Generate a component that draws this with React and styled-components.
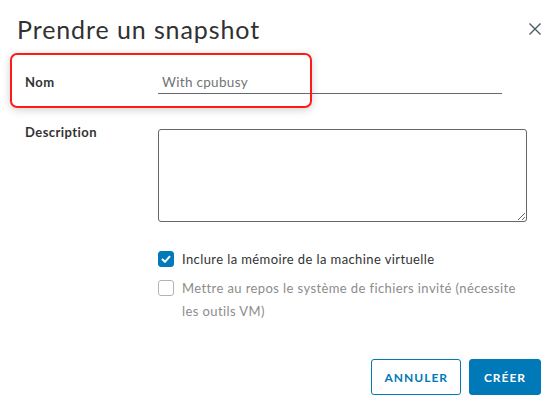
import styled, { createGlobalStyle } from 'styled-components';

const GlobalStyle = createGlobalStyle`
  html, body {
    margin: 0;
    padding: 0;
    background: #fff;
  }
  body {
    font-family: Lato, "Open Sans", sans-serif;
    color: #313131;
  }
  * {
    box-sizing: border-box;
  }
`;

const Modal = styled.div`
  width: 558px;
  height: 408px;
  background: #fff;
  display: flex;
  flex-direction: column;
`;

const Header = styled.div`
  display: flex;
  justify-content: space-between;
  align-items: center;
  padding: 14px 17px 0 17px;
  height: 44px;
`;

const Title = styled.h3`
  margin: 0;
  font-size: 25px;
  line-height: 30px;
  font-weight: 400;
  color: #313131;
  letter-spacing: 0.9px;
`;

const CloseButton = styled.button`
  border: none;
  background: none;
  padding: 0;
  width: 12px;
  height: 12px;
  display: flex;
  cursor: pointer;
`;

const Body = styled.div`
  padding: 26px 0 0 25px;
  display: flex;
  flex-direction: column;
`;

const Row = styled.div`
  position: relative;
  display: grid;
  grid-template-columns: 133px 1fr;
  align-items: ${(p) => (p.$top ? 'start' : 'center')};
  margin-bottom: ${(p) => p.$gap || 0}px;
`;

const Label = styled.label`
  font-size: 13px;
  font-weight: 700;
  line-height: 16px;
  letter-spacing: 0.45px;
  color: #333;
  margin-top: ${(p) => (p.$top ? '-5px' : '0')};
`;

const Highlight = styled.div`
  position: absolute;
  left: -15px;
  top: -17px;
  width: 302px;
  height: 55px;
  border: 2px solid #ff1a1a;
  border-radius: 7px;
  box-shadow: 0 2px 8px rgba(0, 0, 0, 0.18);
  pointer-events: none;
`;

const TextInput = styled.input`
  width: 344px;
  height: 24px;
  border: none;
  border-bottom: 1px solid #5f6a70;
  padding: 0 4px;
  font-family: inherit;
  font-size: 13.5px;
  letter-spacing: 0.3px;
  color: #333;
  outline: none;
  &::placeholder {
    color: #737373;
  }
`;

const TextArea = styled.textarea`
  width: 369px;
  height: 93px;
  border: 1px solid #666;
  border-radius: 3px;
  font-family: inherit;
  font-size: 13px;
  resize: both;
  outline: none;
  display: block;
`;

const Checks = styled.div`
  display: flex;
  flex-direction: column;
  gap: 6px;
  padding-left: 133px;
  margin-top: 26px;
`;

const CheckRow = styled.div`
  display: flex;
  align-items: flex-start;
  gap: 8px;
  width: 369px;
`;

const Box = styled.span`
  flex: none;
  width: 16px;
  height: 16px;
  margin-top: 3px;
  border-radius: 3px;
  display: flex;
  align-items: center;
  justify-content: center;
  background: ${(p) => (p.$checked ? '#0079b8' : '#fff')};
  border: 1px solid ${(p) => (p.$checked ? '#0079b8' : '#b3b3b3')};
`;

const CheckText = styled.span`
  font-size: 13px;
  line-height: 23px;
  letter-spacing: 0.4px;
  color: ${(p) => (p.$disabled ? '#8c8c8c' : '#333')};
`;

const Footer = styled.div`
  display: flex;
  justify-content: flex-end;
  gap: 8px;
  padding-right: 17px;
  margin-top: 36px;
`;

const Button = styled.button`
  height: 36px;
  padding: 0 12px;
  border-radius: 3px;
  border: 1px solid #0079b8;
  background: ${(p) => (p.$primary ? '#0079b8' : '#fff')};
  color: ${(p) => (p.$primary ? '#fff' : '#0079b8')};
  font-family: inherit;
  font-size: 12px;
  font-weight: 700;
  letter-spacing: 1px;
  text-transform: uppercase;
  min-width: ${(p) => p.$w}px;
  cursor: pointer;
`;

function App() {
  return (
    <>
      <GlobalStyle />
      <Modal>
        <Header>
          <Title>Prendre un snapshot</Title>
          <CloseButton aria-label="Fermer">
            <svg width="12" height="12" viewBox="0 0 12 12">
              <path d="M0.5 0.5 L11.5 11.5 M11.5 0.5 L0.5 11.5" stroke="#4a5a63" strokeWidth="1.4" />
            </svg>
          </CloseButton>
        </Header>
        <Body>
          <Row $gap={35}>
            <Highlight />
            <Label>Nom</Label>
            <TextInput placeholder="With cpubusy" />
          </Row>
          <Row $top>
            <Label $top>Description</Label>
            <TextArea />
          </Row>
          <Checks>
            <CheckRow>
              <Box $checked>
                <svg width="10" height="8" viewBox="0 0 10 8">
                  <path d="M1 4 L4 6.8 L9 1.2" fill="none" stroke="#fff" strokeWidth="2" />
                </svg>
              </Box>
              <CheckText>Inclure la mémoire de la machine virtuelle</CheckText>
            </CheckRow>
            <CheckRow>
              <Box />
              <CheckText $disabled>
                Mettre au repos le système de fichiers invité (nécessite les outils VM)
              </CheckText>
            </CheckRow>
          </Checks>
          <Footer>
            <Button $w={89}>Annuler</Button>
            <Button $primary $w={72}>Créer</Button>
          </Footer>
        </Body>
      </Modal>
    </>
  );
}

export default App;
